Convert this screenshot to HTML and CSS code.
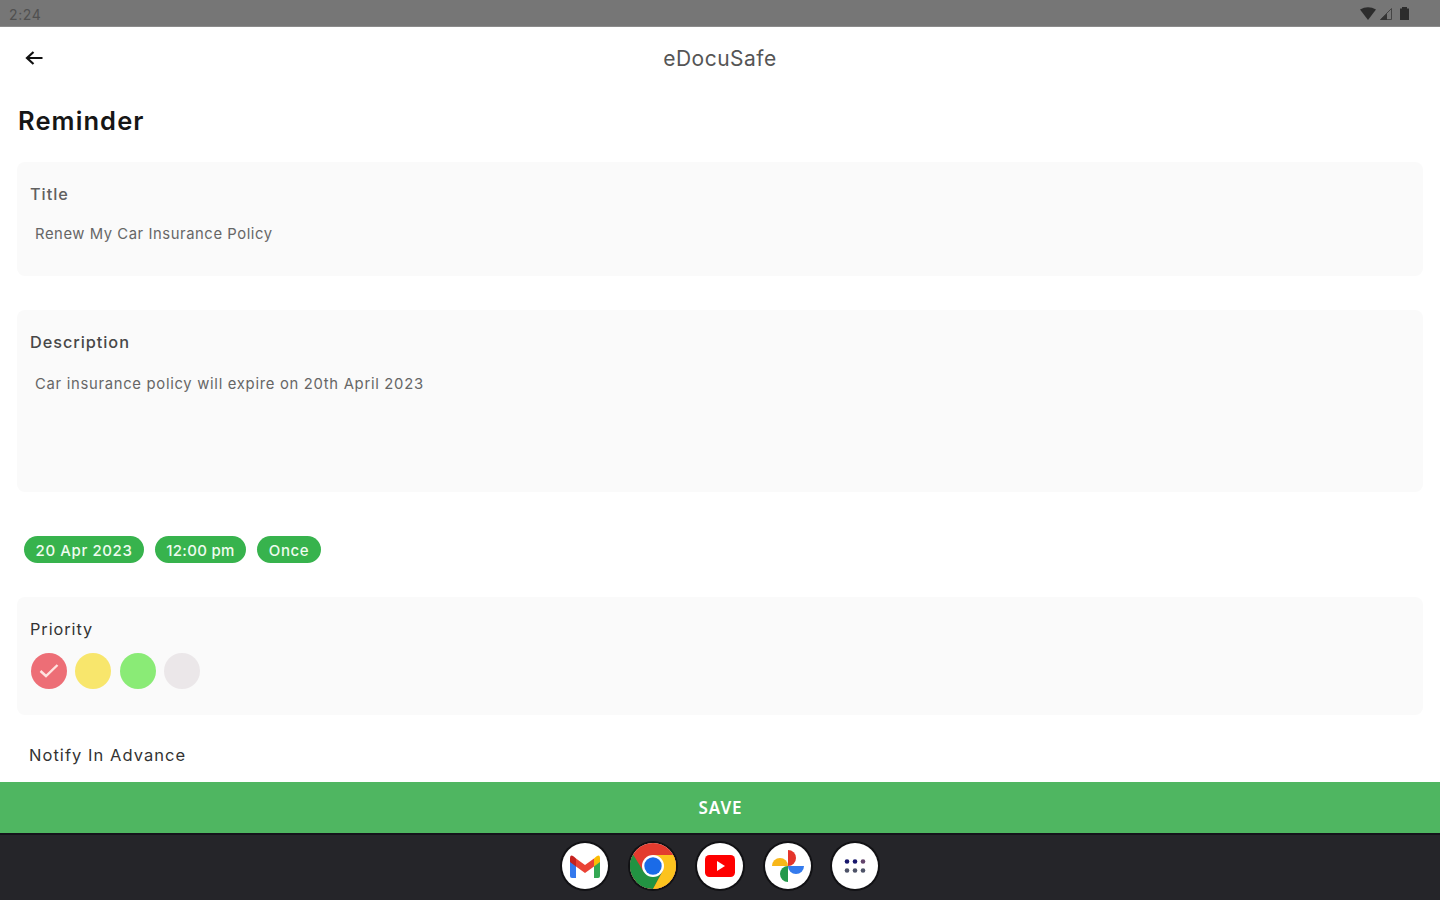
FILE: index.html
```html
<!DOCTYPE html>
<html lang="en">
<head>
<meta charset="utf-8">
<title>eDocuSafe</title>
<link rel="stylesheet" href="styles.css">
</head>
<body>
<div class="screen">
  <div class="status">
    <span class="clock">2:24</span>
    <svg class="status-icons" width="52" height="16" viewBox="0 0 52 16">
      <path d="M0 3.500Q8 -1 16 3.500L8 14Z" fill="#2c2c2c"/>
      <path d="M20.500 13.500L31.500 2.500V13.500Z" fill="none" stroke="#444" stroke-width="1"/>
      <path d="M20 14L27 7.500V14Z" fill="#333"/>
      <path d="M40 2.500H42V1H47V2.500H49V14H40Z" fill="#2c2c2c"/>
    </svg>
  </div>
  <header class="appbar">
    <svg class="back" width="20" height="16" viewBox="0 0 20 16"><path d="M18.500 8H3M9.500 2L3 8L9.500 14" fill="none" stroke="#111" stroke-width="2.200"/></svg>
    <span class="brand">eDocuSafe</span>
  </header>
  <main class="content">
    <h1 class="heading">Reminder</h1>
    <section class="card title-card">
      <div class="label muted">Title</div>
      <div class="value">Renew My Car Insurance Policy</div>
    </section>
    <section class="card description-card">
      <div class="label">Description</div>
      <div class="value">Car insurance policy will expire on 20th April 2023</div>
    </section>
    <div class="chips">
      <span class="chip date">20 Apr 2023</span>
      <span class="chip time">12:00 pm</span>
      <span class="chip once">Once</span>
    </div>
    <section class="card priority-card">
      <div class="label regular">Priority</div>
      <div class="dots">
        <span class="dot red"><svg width="20" height="16" viewBox="0 0 20 16"><path d="M1.500 8L7 13L18.500 2" fill="none" stroke="#ffe3e0" stroke-width="2.400"/></svg></span>
        <span class="dot yellow"></span>
        <span class="dot green"></span>
        <span class="dot gray"></span>
      </div>
    </section>
    <div class="notify">Notify In Advance</div>
  </main>
  <div class="save">SAVE</div>
  <nav class="dock">
    <span class="app"><svg width="46" height="46" viewBox="0 0 46 46">
      <path d="M8 15L14 19.500V35H10Q8 35 8 33Z" fill="#3479ed"/>
      <path d="M38 15L32 19.500V35H36Q38 35 38 33Z" fill="#33a853"/>
      <path d="M32 15.500Q38 9.500 38 15.500V19L32 23.500Z" fill="#fbbc05"/>
      <path d="M14 15.500Q8 9.500 8 15.500V19L14 23.500Z" fill="#c5221f"/>
      <path d="M14 15.500L23 22L32 15.500V23.500L23 30L14 23.500Z" fill="#ea4335"/>
    </svg></span>
    <span class="app"><svg width="46" height="46" viewBox="0 0 46 46">
      <circle cx="23" cy="23" r="23" fill="#e33b2e"/>
      <path d="M3.080 11.500A23 23 0 0 0 23 46L32.500 28.500L23 23L13.500 28.500Z" fill="#229342"/>
      <path d="M23 12H43.200A23 23 0 0 1 23 46L32.500 28.500Z" fill="#fcc31e"/>
      <circle cx="23" cy="23" r="11" fill="#fff"/>
      <circle cx="23" cy="23" r="8.700" fill="#1a6be8"/>
    </svg></span>
    <span class="app"><svg width="46" height="46" viewBox="0 0 46 46">
      <rect x="8" y="12" width="30" height="22" rx="4.500" fill="#fe0000"/>
      <path d="M20 18L28 23L20 28Z" fill="#fff"/>
    </svg></span>
    <span class="app"><svg width="46" height="46" viewBox="0 0 46 46">
      <path d="M23 7A8 8 0 0 1 23 23Z" fill="#e4342b"/>
      <path d="M39 23A8 8 0 0 1 23 23Z" fill="#347bed"/>
      <path d="M23 39A8 8 0 0 1 23 23Z" fill="#23994a"/>
      <path d="M7 23A8 8 0 0 1 23 23Z" fill="#f8b719"/>
    </svg></span>
    <span class="app"><svg width="46" height="46" viewBox="0 0 46 46">
      <g fill="#17176c"><circle cx="15" cy="18.500" r="2.300"/><circle cx="23" cy="18.500" r="2.300"/></g>
      <circle cx="31" cy="18.500" r="2.300" fill="#62446c"/>
      <g fill="#4d5368"><circle cx="15" cy="27.500" r="2.300"/><circle cx="23" cy="27.500" r="2.300"/><circle cx="31" cy="27.500" r="2.300"/></g>
    </svg></span>
  </nav>
</div>
</body>
</html>
```
FILE: styles.css
```css
* { box-sizing: border-box; }
body { margin: 0; background: #fff; font-family: Inter, "Liberation Sans", sans-serif; }
.screen { width: 1440px; height: 900px; display: flex; flex-direction: column; overflow: hidden; white-space: nowrap; }
.status { height: 27px; flex: none; background: #767676; border-bottom: 1px solid #8b8b8b; display: flex; justify-content: space-between; padding: 6px 28px 0 9px; }
.clock { font-size: 14px; letter-spacing: 0.6px; line-height: 17px; color: #505050; }
.appbar { height: 62px; flex: none; display: grid; grid-template-columns: 1fr auto 1fr; align-items: center; padding: 0 24px; }
.back { justify-self: start; }
.brand { grid-column: 2; font-size: 21px; letter-spacing: 0.5px; color: #555; }
.content { flex: 1; min-height: 0; padding: 0 17px; display: flex; flex-direction: column; }
.heading { margin: 15px 1px 0; font-size: 25.5px; letter-spacing: 1.1px; line-height: 34px; height: 34px; font-weight: 600; color: #161616; }
.card { background: #fafafa; border-radius: 8px; flex: none; padding-left: 13px; }
.title-card { height: 114px; margin-top: 24px; padding-top: 21px; }
.description-card { height: 182px; margin-top: 34px; padding-top: 21px; }
.label { font-size: 16.3px; letter-spacing: 0.95px; line-height: 22px; color: #484848; font-weight: 500; }
.muted { color: #606060; }
.regular { font-weight: 400; color: #333; }
.value { font-size: 14.8px; letter-spacing: 0.57px; line-height: 20px; color: #666; padding-left: 5px; margin-top: 19px; }
.description-card .value { margin-top: 21px; letter-spacing: 0.71px; }
.chips { display: flex; gap: 11px; margin: 44px 0 0 7px; height: 27px; flex: none; }
.chip { height: 27px; border-radius: 14px; background: #37b34d; color: #effbef; display: flex; align-items: center; justify-content: center; font-size: 15px; letter-spacing: 0.6px; padding-top: 1px; font-weight: 500; }
.date { width: 120px; }
.time { width: 91px; letter-spacing: 0.3px; }
.once { width: 64px; }
.priority-card { height: 118px; margin-top: 34px; padding-top: 21px; }
.dots { display: flex; gap: 8.4px; margin: 13px 0 0 0.8px; }
.dot { width: 36px; height: 36px; border-radius: 50%; display: flex; align-items: center; justify-content: center; }
.red { background: #ed6e76; }
.yellow { background: #f8e66c; }
.green { background: #8aeb76; }
.gray { background: #ebe7e9; }
.notify { margin: 29px 0 0 12px; font-size: 16.5px; letter-spacing: 1.05px; line-height: 22px; color: #333; }
.save { height: 51px; flex: none; background: #4fb661; color: #fff; display: flex; align-items: center; justify-content: center; font-family: "Noto Sans", sans-serif; font-size: 17px; letter-spacing: 0.9px; padding-left: 1px; font-weight: 600; }
.dock { height: 67px; flex: none; background: #252529; border-top: 2px solid #15131b; display: flex; justify-content: center; align-items: center; gap: 21.5px; padding-bottom: 3px; }
.app { width: 46px; height: 46px; border-radius: 50%; background: #fff; box-shadow: 0 0 0 2px #111114; }
.app svg { display: block; }
```
